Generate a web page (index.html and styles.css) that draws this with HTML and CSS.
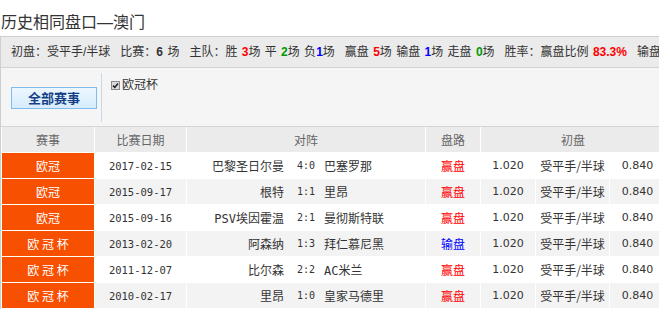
FILE: index.html
```html
<!DOCTYPE html>
<html lang="zh-CN">
<head>
<meta charset="utf-8">
<title>历史相同盘口—澳门</title>
<link rel="stylesheet" href="styles.css">
</head>
<body>
<div class="page">
  <h2 class="title">历史相同盘口—澳门</h2>
  <div class="panel">
    <div class="stats">
      <span class="item">初盘：受平手/半球</span>
      <span class="item">比赛：<b>6</b> 场</span>
      <span class="item">主队：胜 <b class="red">3</b>场 平 <b class="green">2</b>场 负<b class="blue">1</b>场</span>
      <span class="item">赢盘 <b class="red">5</b>场 输盘 <b class="blue">1</b>场 走盘 <b class="green">0</b>场</span>
      <span class="item">胜率：赢盘比例 <b class="red">83.3%</b></span>
      <span class="item">输盘比例 <b class="blue">16.7%</b></span>
    </div>
    <div class="filter">
      <div class="filter-main"><button class="all-btn" type="button">全部赛事</button></div>
      <div class="filter-list">
        <label class="chk"><span class="box"><svg width="9" height="9" viewBox="0 0 9 9"><rect x="0.5" y="0.5" width="8" height="8" fill="#dcdcdc" stroke="#8a8a8a"/><path d="M2 4.6 L3.8 6.4 L7 2.4" fill="none" stroke="#222" stroke-width="1.6"/></svg></span>欧冠杯</label>
      </div>
    </div>
    <table class="matches">
      <colgroup>
        <col class="c1"><col class="c2"><col class="c3"><col class="c4"><col class="c5"><col class="c6"><col class="c7">
      </colgroup>
      <thead>
        <tr><th>赛事</th><th>比赛日期</th><th>对阵</th><th>盘路</th><th colspan="3">初盘</th></tr>
      </thead>
      <tbody>
        <tr>
          <td class="league">欧冠</td><td class="date">2017-02-15</td>
          <td class="vs"><div class="vs-inner"><span class="home">巴黎圣日尔曼</span><span class="score">4:0</span><span class="away">巴塞罗那</span></div></td>
          <td class="res win">赢盘</td><td class="num">1.020</td><td class="line">受平手/半球</td><td class="num">0.840</td>
        </tr>
        <tr>
          <td class="league">欧冠</td><td class="date">2015-09-17</td>
          <td class="vs"><div class="vs-inner"><span class="home">根特</span><span class="score">1:1</span><span class="away">里昂</span></div></td>
          <td class="res win">赢盘</td><td class="num">1.020</td><td class="line">受平手/半球</td><td class="num">0.840</td>
        </tr>
        <tr>
          <td class="league">欧冠</td><td class="date">2015-09-16</td>
          <td class="vs"><div class="vs-inner"><span class="home">PSV埃因霍温</span><span class="score">2:1</span><span class="away">曼彻斯特联</span></div></td>
          <td class="res win">赢盘</td><td class="num">1.020</td><td class="line">受平手/半球</td><td class="num">0.840</td>
        </tr>
        <tr>
          <td class="league">欧 冠 杯</td><td class="date">2013-02-20</td>
          <td class="vs"><div class="vs-inner"><span class="home">阿森纳</span><span class="score">1:3</span><span class="away">拜仁慕尼黑</span></div></td>
          <td class="res lose">输盘</td><td class="num">1.020</td><td class="line">受平手/半球</td><td class="num">0.840</td>
        </tr>
        <tr>
          <td class="league">欧 冠 杯</td><td class="date">2011-12-07</td>
          <td class="vs"><div class="vs-inner"><span class="home">比尔森</span><span class="score">2:2</span><span class="away">AC米兰</span></div></td>
          <td class="res win">赢盘</td><td class="num">1.020</td><td class="line">受平手/半球</td><td class="num">0.840</td>
        </tr>
        <tr>
          <td class="league">欧 冠 杯</td><td class="date">2010-02-17</td>
          <td class="vs"><div class="vs-inner"><span class="home">里昂</span><span class="score">1:0</span><span class="away">皇家马德里</span></div></td>
          <td class="res win">赢盘</td><td class="num">1.020</td><td class="line">受平手/半球</td><td class="num">0.840</td>
        </tr>
      </tbody>
    </table>
  </div>
</div>
</body>
</html>
```

FILE: styles.css
```css
html {
  overflow: hidden;
}
body {
  margin: 0;
  background: #fff;
  font-family: "Liberation Sans", "Noto Sans CJK SC", sans-serif;
  font-size: 12px;
  color: #333;
}
.page {
  width: 700px;
}
.title {
  margin: 12px 0 2px 1px;
  font-size: 16px;
  line-height: 22px;
  font-weight: normal;
  color: #333;
}
.panel {
  border-top: 1px solid #cfcfcf;
  border-left: 1px solid #cfcfcf;
}
.stats {
  display: flex;
  gap: 10px;
  height: 30px;
  line-height: 30px;
  padding-left: 10px;
  background: #ebebeb;
  border-bottom: 1px solid #d3d3d3;
  white-space: nowrap;
  overflow: hidden;
  word-spacing: 1px;
}
.stats b {
  font-weight: bold;
  color: #333;
}
.stats b.red { color: #f00; }
.stats b.green { color: #090; }
.stats b.blue { color: #00f; }

.filter {
  display: flex;
  height: 58px;
  background: #f5f5f5;
  border-bottom: 1px solid #d5d5d5;
}
.filter-main {
  display: flex;
  align-items: center;
  padding: 0 4px 0 10px;
  margin: 5px 0 4px;
  border-right: 1px solid #c8d8ea;
}
.all-btn {
  width: 86px;
  height: 22px;
  margin: 0;
  padding: 0;
  border: 1px solid #80bdee;
  background: linear-gradient(#edf7ff, #d6ecfc);
  font-family: "Noto Sans CJK SC", sans-serif;
  font-size: 13px;
  font-weight: bold;
  color: #173f86;
  line-height: 20px;
}
.filter-list {
  padding: 9px 0 0 9px;
}
.chk {
  display: flex;
  align-items: center;
  line-height: 17px;
  color: #333;
}
.box {
  display: flex;
  width: 9px;
  height: 9px;
  margin: 0 2px 0 0;
}

.matches {
  width: 665px;
  table-layout: fixed;
  border-collapse: separate;
  border-spacing: 0;
}
.c1 { width: 94px; }
.c2 { width: 92px; }
.c3 { width: 239px; }
.c4 { width: 55px; }
.c5 { width: 55px; }
.c6 { width: 74px; }
.c7 { width: 56px; }

.matches th,
.matches td {
  box-sizing: border-box;
  height: 26px;
  padding: 0;
  border-right: 1px solid #fff;
  border-bottom: 1px solid #fff;
  text-align: center;
  white-space: nowrap;
  overflow: hidden;
}
.matches th:first-child,
.matches td:first-child {
  border-left: 1px solid #fff;
}
.matches th {
  background: #ebebeb;
  font-weight: normal;
  color: #666;
}
.matches tbody tr:nth-child(even) td {
  background: #f3f3f3;
}
.matches tbody tr td.league {
  background: #f75000;
  color: #fff;
  font-family: "Noto Sans CJK SC", sans-serif;
}
.date {
  font-family: "DejaVu Sans Mono", monospace;
  font-size: 10.5px;
  color: #333;
}
.vs-inner {
  display: flex;
  align-items: center;
}
.home,
.away {
  font-family: "DejaVu Sans Mono", "Noto Sans CJK SC", monospace;
}
.home {
  flex: 0 0 101px;
  box-sizing: border-box;
  padding-right: 4px;
  text-align: right;
}
.score {
  flex: 0 0 36px;
  text-align: center;
  font-family: "DejaVu Sans Mono", monospace;
  font-size: 10px;
}
.away {
  flex: 1;
  text-align: left;
}
.res.win { color: #f00; }
.res.lose { color: #00f; }
.num {
  font-family: "DejaVu Sans", sans-serif;
  font-size: 11px;
}
.line {
  font-family: "Noto Sans CJK SC", sans-serif;
}
```
